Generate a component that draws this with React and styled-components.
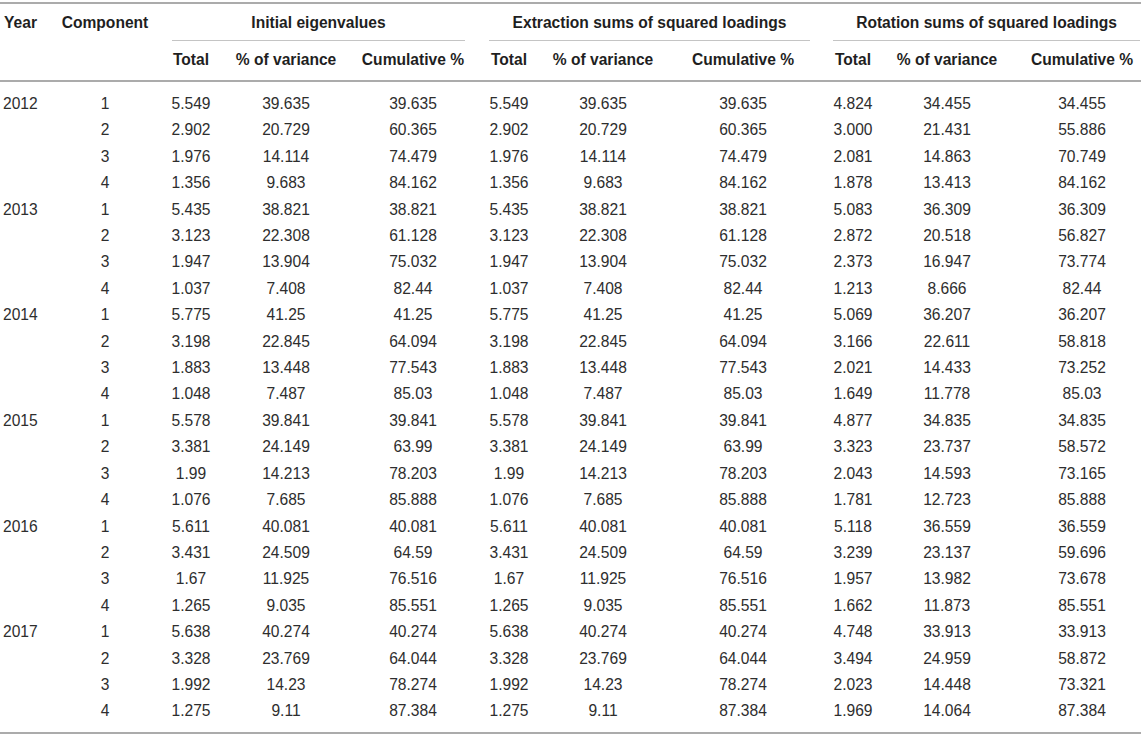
import React from "react";
import styled, { createGlobalStyle } from "styled-components";

const Global = createGlobalStyle`
  html, body { margin: 0; padding: 0; background: #fff; }
  body { font-family: "Liberation Sans", Arial, Helvetica, sans-serif; }
`;

const Wrap = styled.div`
  padding-top: 2px;
  width: 1141px;
`;

const Table = styled.table`
  width: 1141px;
  table-layout: fixed;
  border-collapse: collapse;
  border-top: 2px solid #ababab;
  border-bottom: 2px solid #ababab;
  font-size: 15.6px;
  color: #2e2e2e;
`;

const Head = styled.thead`
  tr:last-child th {
    border-bottom: 2px solid #ababab;
  }
`;

const Body = styled.tbody`
  tr:first-child td { padding-top: 9px; }
  tr:last-child td { padding-bottom: 7px; }
`;

const TopCell = styled.th`
  padding: 0;
  height: 37px;
  font-weight: bold;
  color: #1f1f1f;
  text-align: ${(p) => (p.$left ? "left" : "center")};
  padding-left: ${(p) => (p.$left ? "4px" : "0")};
  vertical-align: top;
`;

const PlainLabel = styled.div`
  padding-top: 2px;
  height: 34px;
  line-height: 34px;
  white-space: nowrap;
`;

const GroupLabel = styled.div`
  margin-left: ${(p) => p.$ml}px;
  margin-right: ${(p) => p.$mr}px;
  padding-top: 2px;
  height: 34px;
  line-height: 34px;
  border-bottom: 1px solid #c4c4c4;
  white-space: nowrap;
`;

const SubCell = styled.th`
  height: 40px;
  padding: 0 0 1px ${(p) => p.$pl || 0}px;
  box-sizing: border-box;
  font-weight: bold;
  color: #1f1f1f;
  text-align: center;
  vertical-align: middle;
  white-space: nowrap;
`;

const Cell = styled.td`
  height: 26.4px;
  padding: 0 0 0 ${(p) => (p.$left ? 3 : p.$pl || 0)}px;
  text-align: ${(p) => (p.$left ? "left" : "center")};
  vertical-align: middle;
  white-space: nowrap;
  line-height: 26.4px;
`;

const widths = [58, 94, 78, 112, 142, 50, 138, 142, 78, 110, 139];

const groups = [
  { title: "Initial eigenvalues", ml: 20, mr: 19 },
  { title: "Extraction sums of squared loadings", ml: 5, mr: 4 },
  { title: "Rotation sums of squared loadings", ml: 19, mr: 1 },
];

const subHeads = ["Total", "% of variance", "Cumulative %"];

const raw = {
  2012: [
    ["5.549", "39.635", "39.635", "5.549", "39.635", "39.635", "4.824", "34.455", "34.455"],
    ["2.902", "20.729", "60.365", "2.902", "20.729", "60.365", "3.000", "21.431", "55.886"],
    ["1.976", "14.114", "74.479", "1.976", "14.114", "74.479", "2.081", "14.863", "70.749"],
    ["1.356", "9.683", "84.162", "1.356", "9.683", "84.162", "1.878", "13.413", "84.162"],
  ],
  2013: [
    ["5.435", "38.821", "38.821", "5.435", "38.821", "38.821", "5.083", "36.309", "36.309"],
    ["3.123", "22.308", "61.128", "3.123", "22.308", "61.128", "2.872", "20.518", "56.827"],
    ["1.947", "13.904", "75.032", "1.947", "13.904", "75.032", "2.373", "16.947", "73.774"],
    ["1.037", "7.408", "82.44", "1.037", "7.408", "82.44", "1.213", "8.666", "82.44"],
  ],
  2014: [
    ["5.775", "41.25", "41.25", "5.775", "41.25", "41.25", "5.069", "36.207", "36.207"],
    ["3.198", "22.845", "64.094", "3.198", "22.845", "64.094", "3.166", "22.611", "58.818"],
    ["1.883", "13.448", "77.543", "1.883", "13.448", "77.543", "2.021", "14.433", "73.252"],
    ["1.048", "7.487", "85.03", "1.048", "7.487", "85.03", "1.649", "11.778", "85.03"],
  ],
  2015: [
    ["5.578", "39.841", "39.841", "5.578", "39.841", "39.841", "4.877", "34.835", "34.835"],
    ["3.381", "24.149", "63.99", "3.381", "24.149", "63.99", "3.323", "23.737", "58.572"],
    ["1.99", "14.213", "78.203", "1.99", "14.213", "78.203", "2.043", "14.593", "73.165"],
    ["1.076", "7.685", "85.888", "1.076", "7.685", "85.888", "1.781", "12.723", "85.888"],
  ],
  2016: [
    ["5.611", "40.081", "40.081", "5.611", "40.081", "40.081", "5.118", "36.559", "36.559"],
    ["3.431", "24.509", "64.59", "3.431", "24.509", "64.59", "3.239", "23.137", "59.696"],
    ["1.67", "11.925", "76.516", "1.67", "11.925", "76.516", "1.957", "13.982", "73.678"],
    ["1.265", "9.035", "85.551", "1.265", "9.035", "85.551", "1.662", "11.873", "85.551"],
  ],
  2017: [
    ["5.638", "40.274", "40.274", "5.638", "40.274", "40.274", "4.748", "33.913", "33.913"],
    ["3.328", "23.769", "64.044", "3.328", "23.769", "64.044", "3.494", "24.959", "58.872"],
    ["1.992", "14.23", "78.274", "1.992", "14.23", "78.274", "2.023", "14.448", "73.321"],
    ["1.275", "9.11", "87.384", "1.275", "9.11", "87.384", "1.969", "14.064", "87.384"],
  ],
};

const rows = [];
Object.keys(raw).forEach((year) => {
  raw[year].forEach((vals, i) => {
    rows.push({ year: i === 0 ? year : "", comp: String(i + 1), vals });
  });
});

export default function App() {
  return (
    <>
      <Global />
      <Wrap>
        <Table>
          <colgroup>
            {widths.map((w, i) => (
              <col key={i} style={{ width: w }} />
            ))}
          </colgroup>
          <Head>
            <tr>
              <TopCell $left>
                <PlainLabel>Year</PlainLabel>
              </TopCell>
              <TopCell>
                <PlainLabel>Component</PlainLabel>
              </TopCell>
              {groups.map((g) => (
                <TopCell key={g.title} colSpan={3}>
                  <GroupLabel $ml={g.ml} $mr={g.mr}>
                    {g.title}
                  </GroupLabel>
                </TopCell>
              ))}
            </tr>
            <tr>
              <SubCell />
              <SubCell />
              {groups.map((g, gi) =>
                subHeads.map((s, si) => (
                  <SubCell key={g.title + s} $pl={gi === 2 && si === 2 ? 21 : 0}>
                    {s}
                  </SubCell>
                ))
              )}
            </tr>
          </Head>
          <Body>
            {rows.map((r, ri) => (
              <tr key={ri}>
                <Cell $left>{r.year}</Cell>
                <Cell>{r.comp}</Cell>
                {r.vals.map((v, vi) => (
                  <Cell key={vi} $pl={vi === 8 ? 21 : 0}>
                    {v}
                  </Cell>
                ))}
              </tr>
            ))}
          </Body>
        </Table>
      </Wrap>
    </>
  );
}
